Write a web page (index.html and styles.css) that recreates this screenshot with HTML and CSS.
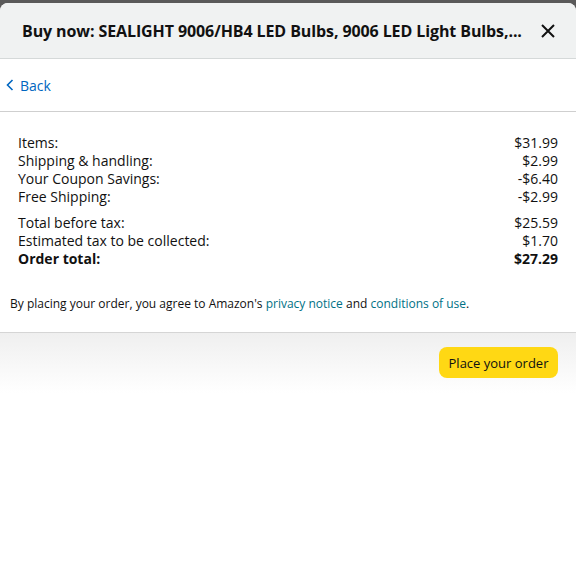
FILE: index.html
```html
<!DOCTYPE html>
<html>
<head>
<meta charset="utf-8">
<link rel="stylesheet" href="styles.css">
</head>
<body>
<div class="backdrop">
  <div class="modal">
    <div class="header">
      <div class="title">Buy now: SEALIGHT 9006/HB4 LED Bulbs, 9006 LED Light Bulbs,...</div>
      <svg class="close" width="14" height="14" viewBox="0 0 14 14"><path d="M1 1 L13 13 M13 1 L1 13" stroke="#111" stroke-width="2" fill="none"/></svg>
    </div>
    <div class="backbar">
      <a class="back"><svg width="8" height="12" viewBox="0 0 8 12"><path d="M6.5 1 L1.5 6 L6.5 11" stroke="#0066c0" stroke-width="1.6" fill="none"/></svg>Back</a>
    </div>
    <div class="summary">
      <div class="group">
        <div class="row"><span>Items:</span><span>$31.99</span></div>
        <div class="row"><span>Shipping &amp; handling:</span><span>$2.99</span></div>
        <div class="row"><span>Your Coupon Savings:</span><span>-$6.40</span></div>
        <div class="row"><span>Free Shipping:</span><span>-$2.99</span></div>
      </div>
      <div class="group">
        <div class="row"><span>Total before tax:</span><span>$25.59</span></div>
        <div class="row"><span>Estimated tax to be collected:</span><span>$1.70</span></div>
        <div class="row total"><span>Order total:</span><span>$27.29</span></div>
      </div>
    </div>
    <div class="legal">By placing your order, you agree to Amazon's <a>privacy notice</a> and <a>conditions of use</a>.</div>
    <div class="footer">
      <button class="place">Place your order</button>
    </div>
  </div>
</div>
</body>
</html>
```
FILE: styles.css
```css
html, body {
  margin: 0;
  padding: 0;
  background: #fff;
  font-family: "Open Sans", "Noto Sans", sans-serif;
  color: #111;
}
.backdrop {
  background: linear-gradient(#5a5a5a 0, #5a5a5a 10px, #fff 10px);
  padding-top: 3px;
}
.modal {
  background: #fff;
  border-radius: 8px 8px 0 0;
  height: 573px;
  overflow: hidden;
  display: flex;
  flex-direction: column;
}
.header {
  background: #f0f2f2;
  height: 56px;
  border-bottom: 1px solid #d5d9d9;
  display: flex;
  align-items: center;
  justify-content: space-between;
  padding: 0 21px 0 22px;
  box-sizing: border-box;
}
.title {
  font-size: 16px;
  font-weight: 700;
  letter-spacing: -0.1px;
  white-space: nowrap;
}
.close { display: block; }
.backbar {
  height: 52px;
  border-bottom: 1px solid #cfcfcf;
  display: flex;
  align-items: center;
  padding-left: 6px;
}
.back {
  color: #0066c0;
  font-size: 14px;
  display: flex;
  align-items: center;
  gap: 6px;
}
.summary {
  padding: 22px 18px 0 18px;
  font-size: 14px;
  line-height: 18px;
}
.group + .group { margin-top: 8px; }
.row {
  display: flex;
  justify-content: space-between;
}
.total { font-weight: 700; }
.legal {
  font-size: 12px;
  padding: 27px 10px 0 10px;
  height: 37px;
  border-bottom: 1px solid #d5d5d5;
  line-height: 18px;
}
.legal a { color: #007185; }
.footer {
  background: linear-gradient(#efefef, #fff 60px);
  display: flex;
  justify-content: flex-end;
  align-items: flex-start;
  padding: 14px 18px 0 0;
  flex: 1;
}
.place {
  background: #ffd814;
  border: none;
  border-radius: 8px;
  height: 31px;
  width: 119px;
  font-family: inherit;
  font-size: 13px;
  color: #0f1111;
  padding: 0;
}
```
